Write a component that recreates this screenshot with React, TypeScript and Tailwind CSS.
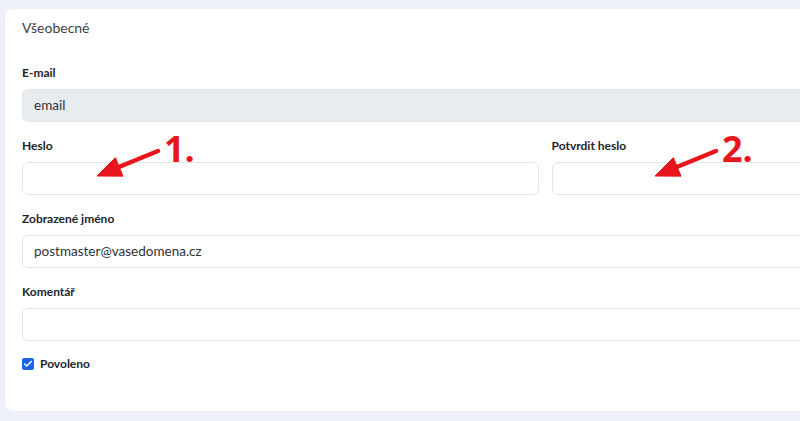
import { Check } from "lucide-react";

function Field({ label, value, disabled }: { label: string; value?: string; disabled?: boolean }) {
  return (
    <div className="mb-[15px]">
      <div className="text-[12px] leading-[17px] font-bold text-[#212529] mb-[8px]">{label}</div>
      <div
        className={
          "h-[33px] rounded-[6px] border border-[#e2e5e9] pl-[11px] flex items-center text-[13.5px] text-[#2f3337] " +
          (disabled ? "bg-[#e9ecef]" : "bg-white")
        }
      >
        {value}
      </div>
    </div>
  );
}

function Arrow({ x1, y1, x2, y2 }: { x1: number; y1: number; x2: number; y2: number }) {
  const dx = x2 - x1;
  const dy = y2 - y1;
  const len = Math.sqrt(dx * dx + dy * dy);
  const ux = dx / len;
  const uy = dy / len;
  const hl = 24;
  const hw = 10;
  const bx = x2 - ux * hl;
  const by = y2 - uy * hl;
  const px = -uy;
  const py = ux;
  return (
    <g fill="#e8161c" stroke="#e8161c">
      <line x1={x1} y1={y1} x2={bx + ux * 3} y2={by + uy * 3} strokeWidth={4.5} strokeLinecap="round" />
      <polygon
        points={`${x2},${y2} ${bx + px * hw},${by + py * hw} ${bx - px * hw},${by - py * hw}`}
        strokeWidth={1}
        strokeLinejoin="round"
      />
    </g>
  );
}

export default function App() {
  return (
    <div
      className="relative w-[800px] h-[421px] overflow-hidden bg-[#eef1fa] pt-[9px] pl-[5px]"
      style={{ fontFamily: "Lato, 'Noto Sans', sans-serif" }}
    >
      <div className="w-[1080px] h-[402px] bg-white rounded-[8px] shadow-[0_0_2px_rgba(0,0,0,0.06)] px-[17px] pt-[9px]">
        <div className="text-[14px] leading-[20px] text-[#3a3f44] mb-[26px]">Všeobecné</div>

        <Field label="E-mail" value="email" disabled />

        <div className="grid grid-cols-2 gap-[13px]">
          <Field label="Heslo" />
          <Field label="Potvrdit heslo" />
        </div>

        <Field label="Zobrazené jméno" value="postmaster@vasedomena.cz" />
        <Field label="Komentář" />

        <div className="flex items-center gap-[6px] -mt-[1px]">
          <span className="w-[12px] h-[12px] rounded-[2px] bg-[#1a66e8] flex items-center justify-center">
            <Check size={10} strokeWidth={3.5} color="white" />
          </span>
          <span className="text-[12px] font-bold text-[#212529]">Povoleno</span>
        </div>
      </div>

      <svg className="absolute inset-0 pointer-events-none" width={800} height={421}>
        <Arrow x1={158} y1={151} x2={97} y2={176} />
        <Arrow x1={716} y1={151} x2={655} y2={176} />
        <text
          x={164}
          y={162}
          fill="#e8161c"
          fontSize={36}
          fontWeight={700}
          fontFamily="'Open Sans', sans-serif"
        >
          1.
        </text>
        <text
          x={722}
          y={162}
          fill="#e8161c"
          fontSize={36}
          fontWeight={700}
          fontFamily="'Open Sans', sans-serif"
        >
          2.
        </text>
      </svg>
    </div>
  );
}
